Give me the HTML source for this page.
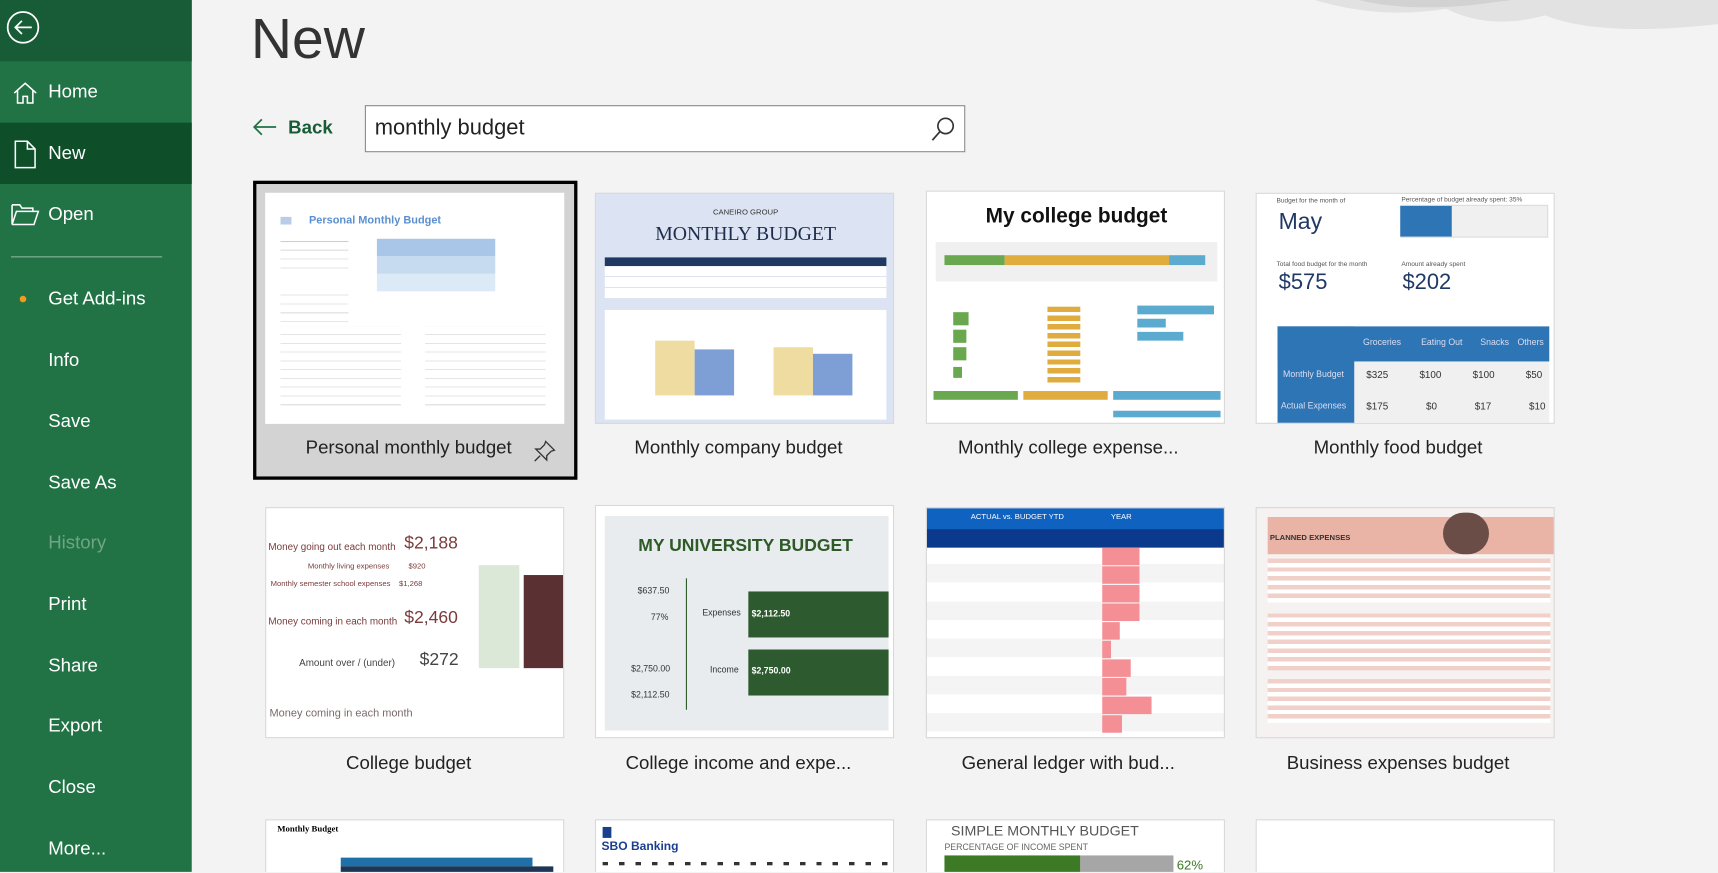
<!DOCTYPE html>
<html><head><meta charset="utf-8"><style>
*{margin:0;padding:0;box-sizing:border-box}
html,body{width:1718px;height:873px;overflow:hidden;background:#f3f3f3;font-family:"Liberation Sans",sans-serif}
#w{position:absolute;left:0;top:0;width:1568px;height:796px;transform:scale(1.09566,1.0953);transform-origin:0 0;background:#f3f3f3;overflow:hidden}
.a{position:absolute}
.side{left:0;top:0;width:175px;height:797px;background:#217346}
.mi{position:absolute;left:44px;color:#fff;font-size:17px}
.th{position:absolute;width:273px;height:211px;background:#fff;border:1px solid #d8d8d8;overflow:hidden}
.lb{position:absolute;width:300px;text-align:center;font-size:17px;color:#222}
.t{position:absolute;white-space:nowrap}
</style></head><body><div id="w">
<svg class="a" style="left:1080px;top:0" width="488" height="50"><path d="M120 0 Q180 18 240 8 Q280 28 330 14 Q380 34 488 22 L488 0Z" fill="#e2e2e2"/><path d="M160 0 Q200 10 260 5 L300 0Z" fill="#d2d2d2"/></svg>
<div class="a side"></div>
<div class="a" style="left:0;top:0;width:175px;height:56px;background:#185c37"></div>
<div class="a" style="left:0;top:112px;width:175px;height:56px;background:#0e4f29"></div>
<svg class="a" style="left:5px;top:9px" width="32" height="32"><circle cx="16" cy="16" r="14" fill="none" stroke="#fff" stroke-width="1.6"/><path d="M24 16H9M15 10L9 16L15 22" fill="none" stroke="#fff" stroke-width="1.6"/></svg>
<svg class="a" style="left:11px;top:73px" width="24" height="24"><path d="M2 12L12 3L22 12M5 9.5V21H10V15H14V21H19V9.5" fill="none" stroke="#fff" stroke-width="1.4"/></svg>
<svg class="a" style="left:13px;top:128px" width="20" height="26"><path d="M1 1H12L19 8V25H1Z M12 1V8H19" fill="none" stroke="#fff" stroke-width="1.4"/></svg>
<svg class="a" style="left:10px;top:185px" width="26" height="22"><path d="M1 2H8L10 5H20V8 M1 2V20L5 8H25L21 20H1" fill="none" stroke="#fff" stroke-width="1.4"/></svg>
<div class="mi" style="top:74px">Home</div>
<div class="mi" style="top:130px">New</div>
<div class="mi" style="top:186px">Open</div>
<div class="a" style="left:10px;top:234px;width:138px;height:1px;background:#8cb59b"></div>
<div class="a" style="left:18px;top:270px;width:6px;height:6px;border-radius:3px;background:#f29b1d"></div>
<div class="mi" style="top:263px">Get Add-ins</div>
<div class="mi" style="top:319px">Info</div>
<div class="mi" style="top:375px">Save</div>
<div class="mi" style="top:431px">Save As</div>
<div class="mi" style="top:486px;color:#6fa585">History</div>
<div class="mi" style="top:542px">Print</div>
<div class="mi" style="top:598px">Share</div>
<div class="mi" style="top:653px">Export</div>
<div class="mi" style="top:709px">Close</div>
<div class="mi" style="top:765px">More...</div>

<div class="t" style="left:229px;top:6px;font-size:52px;color:#333">New</div>
<svg class="a" style="left:230px;top:107px" width="24" height="18"><path d="M22 9H2M9 2L2 9L9 16" fill="none" stroke="#217346" stroke-width="1.6"/></svg>
<div class="t" style="left:263px;top:107px;font-size:17px;color:#185c37;font-weight:bold">Back</div>
<div class="a" style="left:333px;top:96px;width:548px;height:43px;background:#fff;border:1px solid #8a8a8a"></div>
<div class="t" style="left:342px;top:106px;font-size:20px;color:#222">monthly budget</div>
<svg class="a" style="left:848px;top:105px" width="26" height="26"><circle cx="15" cy="10" r="7" fill="none" stroke="#333" stroke-width="1.5"/><path d="M10 15L3 23" stroke="#333" stroke-width="1.6"/></svg>

<div class="a" style="left:231px;top:165px;width:296px;height:273px;background:#d3d3d3;border:3px solid #000"></div>
<div class="th" style="left:242px;top:176px;border:none">
 <div class="t" style="left:40px;top:20px;font-size:10px;color:#5b8fd0;font-weight:bold">Personal Monthly Budget</div>
 <div class="a" style="left:14px;top:22px;width:10px;height:7px;background:#b9cde8"></div>
 <div class="a" style="left:14px;top:44px;width:62px;height:32px;border-top:1px solid #ccd;background:repeating-linear-gradient(#fff 0 7px,#e6e6e6 7px 8px)"></div>
 <div class="a" style="left:14px;top:86px;width:62px;height:32px;background:repeating-linear-gradient(#fff 0 7px,#e6e6e6 7px 8px)"></div>
 <div class="a" style="left:102px;top:42px;width:108px;height:16px;background:#a9c6e8"></div>
 <div class="a" style="left:102px;top:58px;width:108px;height:16px;background:#c6daf0"></div>
 <div class="a" style="left:102px;top:74px;width:108px;height:16px;background:#dce9f6"></div>
 <div class="a" style="left:14px;top:122px;width:110px;height:76px;background:repeating-linear-gradient(#fff 0 7px,#e4e4e4 7px 8px)"></div>
 <div class="a" style="left:146px;top:122px;width:110px;height:76px;background:repeating-linear-gradient(#fff 0 7px,#e4e4e4 7px 8px)"></div>
</div>
<div class="lb" style="left:223px;top:399px">Personal monthly budget</div>
<svg class="a" style="left:486px;top:401px" width="22" height="22"><path d="M12 2L20 10L17 11L13 15L13 19L3 9L7 9L11 5Z M7 15L2 20" fill="none" stroke="#333" stroke-width="1.2"/></svg>

<div class="th" style="left:543px;top:176px;background:#dce4f3">
 <div class="t" style="left:0;width:273px;text-align:center;top:14px;font-size:7px;color:#333">CANEIRO GROUP</div>
 <div class="t" style="left:0;width:273px;text-align:center;top:26px;font-size:18px;color:#1f2d4c;font-family:'Liberation Serif',serif">MONTHLY BUDGET</div>
 <div class="a" style="left:8px;top:58px;width:257px;height:8px;background:#1f3864"></div>
 <div class="a" style="left:8px;top:66px;width:257px;height:30px;background:repeating-linear-gradient(#fff 0 9px,#dce4f3 9px 10px)"></div>
 <div class="a" style="left:8px;top:106px;width:257px;height:100px;background:#fff"></div>
 <div class="a" style="left:54px;top:134px;width:36px;height:50px;background:#efdca1"></div>
 <div class="a" style="left:90px;top:142px;width:36px;height:42px;background:#7d9fd6"></div>
 <div class="a" style="left:162px;top:140px;width:36px;height:44px;background:#efdca1"></div>
 <div class="a" style="left:198px;top:146px;width:36px;height:38px;background:#7d9fd6"></div>
</div>
<div class="lb" style="left:524px;top:399px">Monthly company budget</div>

<div class="th" style="left:845px;top:174px;height:213px">
 <div class="t" style="left:0;width:273px;text-align:center;top:12px;font-size:19px;font-weight:bold;color:#111">My college budget</div>
 <div class="a" style="left:8px;top:46px;width:257px;height:36px;background:#f0f0f0"></div>
 <div class="a" style="left:16px;top:58px;width:55px;height:9px;background:#6aa84f"></div>
 <div class="a" style="left:71px;top:58px;width:150px;height:9px;background:#e0ac3e"></div>
 <div class="a" style="left:221px;top:58px;width:33px;height:9px;background:#5aabcf"></div>
 <div class="a" style="left:24px;top:110px;width:14px;height:12px;background:#6aa84f"></div>
 <div class="a" style="left:24px;top:126px;width:12px;height:12px;background:#6aa84f"></div>
 <div class="a" style="left:24px;top:142px;width:12px;height:12px;background:#6aa84f"></div>
 <div class="a" style="left:24px;top:160px;width:8px;height:10px;background:#6aa84f"></div>
 <div class="a" style="left:110px;top:105px;width:30px;height:70px;background:repeating-linear-gradient(#e0ac3e 0 5px,#fff 5px 8px)"></div>
 <div class="a" style="left:192px;top:104px;width:70px;height:8px;background:#5aabcf"></div>
 <div class="a" style="left:192px;top:116px;width:26px;height:8px;background:#5aabcf"></div>
 <div class="a" style="left:192px;top:128px;width:42px;height:8px;background:#5aabcf"></div>
 <div class="a" style="left:6px;top:182px;width:77px;height:8px;background:#6aa84f"></div>
 <div class="a" style="left:88px;top:182px;width:77px;height:8px;background:#e0ac3e"></div>
 <div class="a" style="left:170px;top:182px;width:98px;height:8px;background:#5aabcf"></div>
 <div class="a" style="left:170px;top:200px;width:98px;height:6px;background:#5aabcf"></div>
</div>
<div class="lb" style="left:825px;top:399px">Monthly college expense...</div>

<div class="th" style="left:1146px;top:176px">
 <div class="t" style="left:18px;top:4px;font-size:6px;color:#555">Budget for the month of</div>
 <div class="t" style="left:20px;top:14px;font-size:21px;color:#1f3864">May</div>
 <div class="t" style="left:132px;top:3px;font-size:6px;color:#555">Percentage of budget already spent: 35%</div>
 <div class="a" style="left:131px;top:10px;width:135px;height:30px;background:#f0f0f0;border:1px solid #ddd"></div>
 <div class="a" style="left:131px;top:11px;width:47px;height:28px;background:#2e75b6"></div>
 <div class="t" style="left:18px;top:62px;font-size:6px;color:#555">Total food budget for the month</div>
 <div class="t" style="left:20px;top:70px;font-size:20px;color:#1f3864">$575</div>
 <div class="t" style="left:132px;top:62px;font-size:6px;color:#555">Amount already spent</div>
 <div class="t" style="left:133px;top:70px;font-size:20px;color:#1f3864">$202</div>
 <div class="a" style="left:19px;top:121px;width:248px;height:90px;background:#f0f0f0"></div>
 <div class="a" style="left:19px;top:121px;width:248px;height:32px;background:#2e75b6"></div>
 <div class="a" style="left:19px;top:121px;width:70px;height:90px;background:#2e75b6"></div>
 <div class="t" style="left:97px;top:131px;font-size:8px;color:#dde">Groceries</div>
 <div class="t" style="left:150px;top:131px;font-size:8px;color:#dde">Eating Out</div>
 <div class="t" style="left:187px;top:131px;font-size:8px;color:#dde;left:188px">&nbsp;</div>
 <div class="t" style="left:204px;top:131px;font-size:8px;color:#dde">Snacks</div>
 <div class="t" style="left:238px;top:131px;font-size:8px;color:#dde">Others</div>
 <div class="t" style="left:24px;top:160px;font-size:8px;color:#dde">Monthly Budget</div>
 <div class="t" style="left:22px;top:189px;font-size:8px;color:#dde">Actual Expenses</div>
 <div class="t" style="left:100px;top:160px;font-size:9px;color:#333;word-spacing:26px">$325 $100 $100 $50</div>
 <div class="t" style="left:100px;top:189px;font-size:9px;color:#333;word-spacing:32px">$175 $0 $17 $10</div>
</div>
<div class="lb" style="left:1126px;top:399px">Monthly food budget</div>

<div class="th" style="left:242px;top:463px">
 <div class="t" style="left:2px;top:30px;font-size:9px;color:#7a3b3b">Money going out each month</div>
 <div class="t" style="left:126px;top:24px;font-size:16px;color:#7a3b3b">$2,188</div>
 <div class="t" style="left:38px;top:50px;font-size:7px;color:#7a3b3b">Monthly living expenses&nbsp;&nbsp;&nbsp;&nbsp;&nbsp;&nbsp;&nbsp;&nbsp;&nbsp;$920</div>
 <div class="t" style="left:4px;top:66px;font-size:7px;color:#7a3b3b">Monthly semester school expenses&nbsp;&nbsp;&nbsp;&nbsp;$1,268</div>
 <div class="t" style="left:2px;top:98px;font-size:9px;color:#7a3b3b">Money coming in each month</div>
 <div class="t" style="left:126px;top:92px;font-size:16px;color:#7a3b3b">$2,460</div>
 <div class="t" style="left:30px;top:136px;font-size:9px;color:#444">Amount over / (under)</div>
 <div class="t" style="left:140px;top:130px;font-size:16px;color:#444">$272</div>
 <div class="a" style="left:194px;top:52px;width:37px;height:94px;background:#dbe8d8"></div>
 <div class="a" style="left:235px;top:61px;width:36px;height:85px;background:#5a3033"></div>
 <div class="t" style="left:3px;top:182px;font-size:10px;color:#7a6a6a">Money coming in each month</div>
</div>
<div class="lb" style="left:223px;top:687px">College budget</div>

<div class="th" style="left:543px;top:461px;height:213px">
 <div class="a" style="left:8px;top:9px;width:259px;height:196px;background:#e8ecee"></div>
 <div class="t" style="left:0;width:273px;text-align:center;top:28px;font-size:16px;font-weight:bold;color:#2d5a27">MY UNIVERSITY BUDGET</div>
 <div class="a" style="left:82px;top:66px;width:1px;height:120px;background:#2d5a27"></div>
 <div class="t" style="left:38px;top:73px;font-size:8px;color:#333">$637.50</div>
 <div class="t" style="left:50px;top:97px;font-size:8px;color:#333">77%</div>
 <div class="t" style="left:32px;top:144px;font-size:8px;color:#333">$2,750.00</div>
 <div class="t" style="left:32px;top:168px;font-size:8px;color:#333">$2,112.50</div>
 <div class="t" style="left:97px;top:93px;font-size:8px;color:#333">Expenses</div>
 <div class="t" style="left:104px;top:145px;font-size:8px;color:#333">Income</div>
 <div class="a" style="left:139px;top:78px;width:128px;height:42px;background:#2d5a2e"></div>
 <div class="a" style="left:139px;top:131px;width:128px;height:42px;background:#2d5a2e"></div>
 <div class="t" style="left:142px;top:94px;font-size:8px;color:#fff;font-weight:bold">$2,112.50</div>
 <div class="t" style="left:142px;top:146px;font-size:8px;color:#fff;font-weight:bold">$2,750.00</div>
</div>
<div class="lb" style="left:524px;top:687px">College income and expe...</div>

<div class="th" style="left:845px;top:463px;background:repeating-linear-gradient(#fff 0 17px,#f4f4f4 17px 34px)">
 <div class="a" style="left:0;top:0;width:273px;height:19px;background:#0f62c0"></div>
 <div class="t" style="left:40px;top:5px;font-size:7px;color:#fff">ACTUAL vs. BUDGET YTD&nbsp;&nbsp;&nbsp;&nbsp;&nbsp;&nbsp;&nbsp;&nbsp;&nbsp;&nbsp;&nbsp;&nbsp;&nbsp;&nbsp;&nbsp;&nbsp;&nbsp;&nbsp;&nbsp;&nbsp;&nbsp;&nbsp;YEAR</div>
 <div class="a" style="left:0;top:19px;width:273px;height:17px;background:#0b3a8c"></div>
 <div class="a" style="left:160px;top:36px;width:34px;height:16px;background:#f58f96"></div>
 <div class="a" style="left:160px;top:53px;width:34px;height:16px;background:#f58f96"></div>
 <div class="a" style="left:160px;top:70px;width:34px;height:16px;background:#f58f96"></div>
 <div class="a" style="left:160px;top:87px;width:34px;height:16px;background:#f58f96"></div>
 <div class="a" style="left:160px;top:104px;width:16px;height:16px;background:#f58f96"></div>
 <div class="a" style="left:160px;top:121px;width:8px;height:16px;background:#f58f96"></div>
 <div class="a" style="left:160px;top:138px;width:26px;height:16px;background:#f58f96"></div>
 <div class="a" style="left:160px;top:155px;width:22px;height:16px;background:#f58f96"></div>
 <div class="a" style="left:160px;top:172px;width:45px;height:16px;background:#f58f96"></div>
 <div class="a" style="left:160px;top:189px;width:18px;height:16px;background:#f58f96"></div>
</div>
<div class="lb" style="left:825px;top:687px">General ledger with bud...</div>

<div class="th" style="left:1146px;top:463px;background:#f6f2f1">
 <div class="a" style="left:10px;top:8px;width:270px;height:34px;background:#e9b3a5"></div>
 <div class="a" style="left:170px;top:4px;width:42px;height:38px;border-radius:21px;background:#6b4d47"></div>
 <div class="t" style="left:12px;top:24px;font-size:7px;font-weight:bold;color:#333">PLANNED EXPENSES</div>
 <div class="a" style="left:10px;top:46px;width:258px;height:40px;background:repeating-linear-gradient(#f0d0c8 0 4px,#fff 4px 8px)"></div>
 <div class="a" style="left:10px;top:96px;width:258px;height:52px;background:repeating-linear-gradient(#f0d0c8 0 4px,#fff 4px 8px)"></div>
 <div class="a" style="left:10px;top:156px;width:258px;height:40px;background:repeating-linear-gradient(#f0d0c8 0 4px,#fff 4px 8px)"></div>
</div>
<div class="lb" style="left:1126px;top:687px">Business expenses budget</div>

<div class="th" style="left:242px;top:748px">
 <div class="t" style="left:10px;top:3px;font-size:8px;font-weight:bold;font-family:'Liberation Serif',serif">Monthly Budget</div>
 <div class="a" style="left:68px;top:34px;width:175px;height:8px;background:#1f6fa8"></div>
 <div class="a" style="left:68px;top:42px;width:194px;height:8px;background:#1f3556"></div>
</div>
<div class="th" style="left:543px;top:748px">
 <div class="a" style="left:6px;top:6px;width:8px;height:10px;background:#1b3f8f"></div>
 <div class="t" style="left:5px;top:18px;font-size:11px;font-weight:bold;color:#1b3f8f">SBO Banking</div>
 <div class="a" style="left:6px;top:38px;width:262px;height:3px;background:repeating-linear-gradient(90deg,#333 0 5px,#fff 5px 15px)"></div>
</div>
<div class="th" style="left:845px;top:748px">
 <div class="t" style="left:22px;top:2px;font-size:13px;color:#555">SIMPLE MONTHLY BUDGET</div>
 <div class="t" style="left:16px;top:20px;font-size:8px;color:#666">PERCENTAGE OF INCOME SPENT</div>
 <div class="a" style="left:16px;top:32px;width:124px;height:20px;background:#3c7a25"></div>
 <div class="a" style="left:140px;top:32px;width:85px;height:20px;background:#a6a6a6"></div>
 <div class="t" style="left:228px;top:34px;font-size:12px;color:#3c7a25">62%</div>
</div>
<div class="th" style="left:1146px;top:748px"></div>
</div></body></html>
